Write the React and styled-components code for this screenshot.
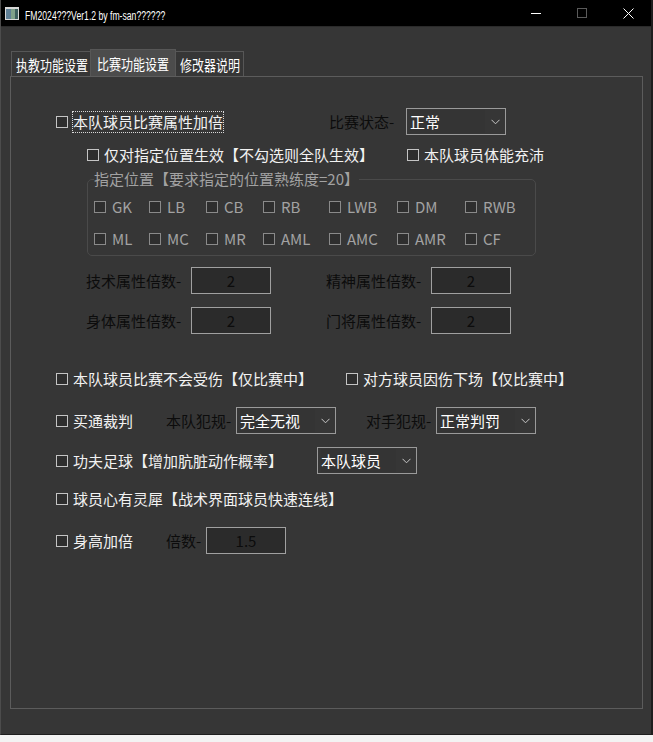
import React from 'react'
import styled, { createGlobalStyle } from 'styled-components'

const Global = createGlobalStyle`
  html, body { margin: 0; padding: 0; }
  body {
    width: 653px;
    height: 742px;
    overflow: hidden;
    background: #f3f3f3;
    font-family: "Noto Sans CJK SC", "Noto Sans", sans-serif;
  }
`

const Window = styled.div`
  width: 650px;
  height: 734px;
  background: #363636;
  border-left: 1px solid #4c4c4c;
  border-right: 2px solid #1e1e1e;
  border-bottom: 1px solid #1e1e1e;
  display: flex;
  flex-direction: column;
`

const TitleBar = styled.div`
  height: 26px;
  background: #000;
  display: flex;
  align-items: center;
  border-bottom: 1px solid #2a2a2a;
`

const TitleText = styled.span`
  flex: 1;
  margin-left: 6px;
  span {
    display: inline-block;
    font-family: "Liberation Sans", "Noto Sans", sans-serif;
    font-size: 12px;
    color: #fff;
    transform: scaleX(0.72);
    transform-origin: left center;
    white-space: nowrap;
  }
`

const Ctrl = styled.div`
  width: 46px;
  height: 26px;
  display: flex;
  align-items: center;
  justify-content: center;
`

const Body = styled.div`
  flex: 1;
  padding: 22px 0 0 9px;
`

const TabRow = styled.div`
  display: flex;
  align-items: flex-end;
  height: 27px;
  padding-left: 1px;
`

const Tab = styled.div`
  width: ${p => p.$w}px;
  height: ${p => (p.$active ? 27 : 25)}px;
  box-sizing: border-box;
  padding-left: ${p => (p.$active ? 6 : 4)}px;
  display: flex;
  align-items: center;
  overflow: hidden;
  color: #fff;
  background: ${p => (p.$active ? '#4c4c4c' : '#363636')};
  border: 1px solid #575757;
  border-bottom: none;
  margin-left: ${p => (p.$active ? -1 : 0)}px;
  margin-right: ${p => (p.$active ? -1 : 0)}px;
  position: relative;
  z-index: ${p => (p.$active ? 2 : 1)};
  span {
    display: inline-block;
    font-size: 15px;
    white-space: nowrap;
    transform: scaleX(0.8);
    transform-origin: left center;
  }
`

const Panel = styled.div`
  width: 633px;
  height: 633px;
  box-sizing: border-box;
  border: 1px solid #5c5c5c;
  padding-top: 31px;
  display: flex;
  flex-direction: column;
`

const Row = styled.div`
  display: flex;
  align-items: center;
  height: ${p => p.$h || 20}px;
  padding-left: ${p => p.$pl}px;
  margin-top: ${p => p.$mt || 0}px;
`

const Cell = styled.div`
  width: ${p => (p.$w ? `${p.$w}px` : 'auto')};
  flex-shrink: 0;
  display: flex;
  align-items: center;
`

const Box = styled.span`
  width: 10px;
  height: 10px;
  border: 1px solid ${p => (p.$dim ? '#8a8a8a' : '#c4c4c4')};
  background: #2e2e2e;
  flex-shrink: 0;
  margin-right: ${p => (p.$dim ? 6 : 5)}px;
`

const Label = styled.span`
  font-size: 15px;
  line-height: 20px;
  white-space: nowrap;
  color: ${p => (p.$dim ? '#a2a2a2' : '#f2f2f2')};
  outline: ${p => (p.$focus ? '1px dotted #d8d8d8' : 'none')};
  outline-offset: 0;
`

const DarkLabel = styled.span`
  font-size: 15px;
  line-height: 20px;
  color: #0c0c0c;
  white-space: nowrap;
`

const Input = styled.div`
  width: 80px;
  height: 27px;
  box-sizing: border-box;
  border: 1px solid #a0a0a0;
  background: #2b2b2b;
  color: #0c0c0c;
  font-size: 15px;
  display: flex;
  align-items: center;
  justify-content: center;
`

const Select = styled.div`
  width: 100px;
  height: 27px;
  box-sizing: border-box;
  border: 1px solid #9a9a9a;
  background: #363636;
  display: flex;
  align-items: center;
  padding-left: 3px;
  font-size: 15px;
  color: #fff;
`

const SelectText = styled.span`
  flex: 1;
  background: #343434;
  height: 23px;
  line-height: 23px;
`

const Chevron = styled.span`
  width: 20px;
  display: flex;
  justify-content: center;
`

const Group = styled.fieldset`
  margin: 4px 0 0 76px;
  padding: 2px 0 0 6px;
  width: 449px;
  box-sizing: border-box;
  height: 87px;
  border: 1px solid #4a4a4a;
  border-radius: 5px;
  min-width: 0;
`

const Legend = styled.legend`
  font-size: 15px;
  line-height: 20px;
  color: #a2a2a2;
  padding: 0;
  margin-left: 0;
`

const PosGrid = styled.div`
  display: grid;
  grid-template-columns: 55px 57px 57px 66px 68px 68px auto;
  grid-auto-rows: 32px;
  align-items: center;
`

function Check({ children, dim, focus }) {
  return (
    <Cell>
      <Box $dim={dim} />
      <Label $dim={dim} $focus={focus}>{children}</Label>
    </Cell>
  )
}

function Drop({ value }) {
  return (
    <Select>
      <SelectText>{value}</SelectText>
      <Chevron>
        <svg width="9" height="6" viewBox="0 0 9 6">
          <path d="M0.5 0.8 L4.5 4.8 L8.5 0.8" fill="none" stroke="#c8c8c8" strokeWidth="1" />
        </svg>
      </Chevron>
    </Select>
  )
}

const positions = ['GK', 'LB', 'CB', 'RB', 'LWB', 'DM', 'RWB', 'ML', 'MC', 'MR', 'AML', 'AMC', 'AMR', 'CF']

export default function App() {
  return (
    <>
      <Global />
      <Window>
        <TitleBar>
          <svg width="14" height="13" viewBox="0 0 14 13" style={{ marginLeft: 4 }}>
            <rect x="0" y="0" width="14" height="13" fill="#d8d8d8" />
            <rect x="1" y="2" width="5" height="10" fill="#5f7f95" />
            <rect x="6" y="2" width="4" height="10" fill="#7fa08a" />
            <rect x="10" y="2" width="3" height="10" fill="#3d5e5e" />
          </svg>
          <TitleText><span>FM2024???Ver1.2 by fm-san??????</span></TitleText>
          <Ctrl>
            <svg width="10" height="10" viewBox="0 0 10 10"><path d="M0 5.5 H10" stroke="#fff" /></svg>
          </Ctrl>
          <Ctrl>
            <svg width="10" height="10" viewBox="0 0 10 10"><rect x="0.5" y="0.5" width="9" height="9" fill="none" stroke="#5a5a5a" /></svg>
          </Ctrl>
          <Ctrl>
            <svg width="11" height="11" viewBox="0 0 11 11"><path d="M0.5 0.5 L10.5 10.5 M10.5 0.5 L0.5 10.5" stroke="#fff" /></svg>
          </Ctrl>
        </TitleBar>
        <Body>
          <TabRow>
            <Tab $w={80}><span>执教功能设置</span></Tab>
            <Tab $w={86} $active><span>比赛功能设置</span></Tab>
            <Tab $w={69}><span>修改器说明</span></Tab>
          </TabRow>
          <Panel>
            <Row $h={27} $pl={45}>
              <Cell $w={273}><Box /><Label $focus>本队球员比赛属性加倍</Label></Cell>
              <Cell $w={77}><DarkLabel>比赛状态-</DarkLabel></Cell>
              <Drop value="正常" />
            </Row>
            <Row $pl={76} $mt={10}>
              <Cell $w={320}><Box /><Label>仅对指定位置生效【不勾选则全队生效】</Label></Cell>
              <Check>本队球员体能充沛</Check>
            </Row>
            <Group>
              <Legend>指定位置【要求指定的位置熟练度=20】</Legend>
              <PosGrid>
                {positions.map(p => (
                  <Check key={p} dim>{p}</Check>
                ))}
              </PosGrid>
            </Group>
            <Row $h={27} $pl={75} $mt={11}>
              <Cell $w={105}><DarkLabel>技术属性倍数-</DarkLabel></Cell>
              <Cell $w={135}><Input>2</Input></Cell>
              <Cell $w={105}><DarkLabel>精神属性倍数-</DarkLabel></Cell>
              <Input>2</Input>
            </Row>
            <Row $h={27} $pl={75} $mt={13}>
              <Cell $w={105}><DarkLabel>身体属性倍数-</DarkLabel></Cell>
              <Cell $w={135}><Input>2</Input></Cell>
              <Cell $w={105}><DarkLabel>门将属性倍数-</DarkLabel></Cell>
              <Input>2</Input>
            </Row>
            <Row $pl={45} $mt={35}>
              <Cell $w={290}><Box /><Label>本队球员比赛不会受伤【仅比赛中】</Label></Cell>
              <Check>对方球员因伤下场【仅比赛中】</Check>
            </Row>
            <Row $h={27} $pl={45} $mt={18}>
              <Cell $w={110}><Box /><Label>买通裁判</Label></Cell>
              <Cell $w={70}><DarkLabel>本队犯规-</DarkLabel></Cell>
              <Cell $w={130}><Drop value="完全无视" /></Cell>
              <Cell $w={70}><DarkLabel>对手犯规-</DarkLabel></Cell>
              <Drop value="正常判罚" />
            </Row>
            <Row $h={27} $pl={45} $mt={13}>
              <Cell $w={261}><Box /><Label>功夫足球【增加肮脏动作概率】</Label></Cell>
              <Drop value="本队球员" />
            </Row>
            <Row $pl={45} $mt={15}>
              <Check>球员心有灵犀【战术界面球员快速连线】</Check>
            </Row>
            <Row $h={27} $pl={45} $mt={18}>
              <Cell $w={110}><Box /><Label>身高加倍</Label></Cell>
              <Cell $w={40}><DarkLabel>倍数-</DarkLabel></Cell>
              <Input>1.5</Input>
            </Row>
          </Panel>
        </Body>
      </Window>
    </>
  )
}
